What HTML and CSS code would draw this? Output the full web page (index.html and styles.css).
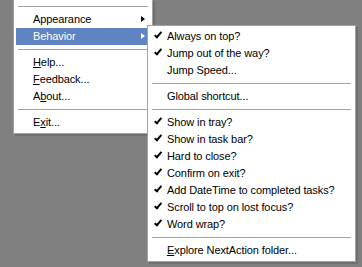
FILE: index.html
```html
<!DOCTYPE html>
<html>
<head>
    <title>NextAction menu</title>
    <link rel="stylesheet" href="styles.css">
</head>
<body>
<div class="desktop">
    <div class="menu main-menu">
        <div class="separator"></div>
        <div class="item has-sub">Appearance<span class="arrow"></span></div>
        <div class="item has-sub active">Behavior<span class="arrow"></span></div>
        <div class="separator"></div>
        <div class="item"><u>H</u>elp...</div>
        <div class="item"><u>F</u>eedback...</div>
        <div class="item">A<u>b</u>out...</div>
        <div class="separator"></div>
        <div class="item">E<u>x</u>it...</div>
    </div>

    <div class="menu sub-menu">
        <div class="item checked">Always on top?</div>
        <div class="item checked">Jump out of the way?</div>
        <div class="item">Jump Speed...</div>
        <div class="separator"></div>
        <div class="item">Global shortcut...</div>
        <div class="separator"></div>
        <div class="item checked">Show in tray?</div>
        <div class="item checked">Show in task bar?</div>
        <div class="item checked">Hard to close?</div>
        <div class="item checked">Confirm on exit?</div>
        <div class="item checked">Add DateTime to completed tasks?</div>
        <div class="item checked">Scroll to top on lost focus?</div>
        <div class="item checked">Word wrap?</div>
        <div class="separator"></div>
        <div class="item"><u>E</u>xplore NextAction folder...</div>
    </div>
</div>
</body>
</html>
```

FILE: styles.css
```css
body {
    margin: 0;
    background-color: #808080;
    font-family: "Liberation Sans", Arial, sans-serif;
    font-size: 11px;
    letter-spacing: -0.1px;
}

.desktop {
    position: relative;
    width: 362px;
    height: 267px;
    overflow: hidden;
}

.menu {
    box-sizing: border-box;
    background-color: #fff;
    border: 1px solid #a3a3a3;
    box-shadow: 2px 2px 0 rgba(0, 0, 0, 0.12);
}

.main-menu {
    width: 140px;
    margin-left: 13px;
    margin-top: -1px;
    padding: 2px 4px 2px 2px;
}

.sub-menu {
    position: absolute;
    left: 147px;
    top: 25px;
    width: 209px;
    padding: 2px 4px 2px 2px;
}

.item {
    position: relative;
    height: 17px;
    line-height: 17px;
    padding-left: 17px;
    color: #000;
    white-space: nowrap;
}

.item.active {
    background-color: #6083c2;
    color: #fff;
}

.separator {
    height: 9px;
    position: relative;
}

.separator::after {
    content: "";
    position: absolute;
    left: 2px;
    right: 0;
    top: 4px;
    border-top: 1px solid #a3a3a3;
}

.arrow {
    position: absolute;
    right: 3px;
    top: 5px;
    width: 0;
    height: 0;
    border-top: 3.5px solid transparent;
    border-bottom: 3.5px solid transparent;
    border-left: 4px solid #000;
}

.item.active .arrow {
    border-left-color: #fff;
}

.item.checked::before {
    content: "";
    position: absolute;
    top: 8px;
    left: 4px;
    width: 6px;
    height: 2px;
    border-left: 2px solid #000;
    border-bottom: 2px solid #000;
    transform: rotate(-50deg);
    transform-origin: 0 0;
}

u {
    text-decoration-thickness: 1px;
    text-underline-offset: 1px;
}
```
